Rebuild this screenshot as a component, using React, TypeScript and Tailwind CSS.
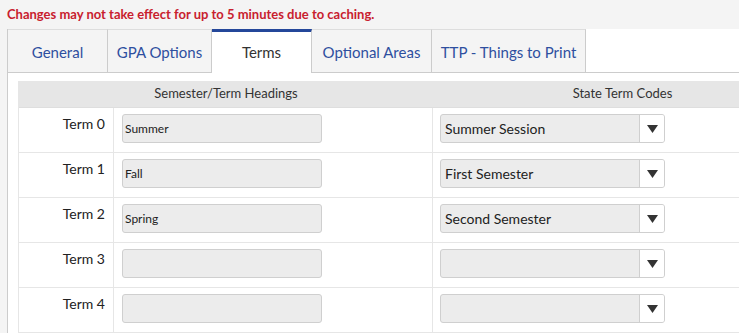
import React from "react";

const tabs = [
  { label: "General", w: "w-[100px]" },
  { label: "GPA Options", w: "w-[104px]" },
  { label: "Terms", w: "w-[100px]", active: true },
  { label: "Optional Areas", w: "w-[120px]" },
  { label: "TTP - Things to Print", w: "w-[154px]" },
];

const rows = [
  { term: "Term 0", heading: "Summer", code: "Summer Session" },
  { term: "Term 1", heading: "Fall", code: "First Semester" },
  { term: "Term 2", heading: "Spring", code: "Second Semester" },
  { term: "Term 3", heading: "", code: "" },
  { term: "Term 4", heading: "", code: "" },
];

function Select({ value }: { value: string }) {
  return (
    <div className="flex h-[29px] w-[225px] overflow-hidden rounded-[3px] border border-[#cfcfcf] bg-[#ececec]">
      <div className="flex flex-1 items-center pl-[4px] text-[14px] text-[#222]">{value}</div>
      <div className="flex w-[25px] items-center justify-center border-l border-[#cfcfcf] bg-white">
        <svg width="11" height="8" viewBox="0 0 11 8">
          <path d="M0 0 H11 L5.5 8 Z" fill="#333" />
        </svg>
      </div>
    </div>
  );
}

export default function App() {
  return (
    <div className="h-[333px] w-[739px] overflow-hidden bg-[#f4f4f4] font-['Lato',sans-serif]">
      <div className="flex h-[29px] items-center pl-[7px] text-[13px] font-bold text-[#c8202e]">
        Changes may not take effect for up to 5 minutes due to caching.
      </div>
      <div className="ml-[7px] h-full border-l border-[#cccccc] bg-white">
        <div className="flex h-[44px] border-b border-[#cccccc]">
          {tabs.map((t) =>
            t.active ? (
              <div
                key={t.label}
                className={`${t.w} -mb-px flex items-center justify-center border-r border-t-[3px] border-[#cccccc] border-t-[#24479a] bg-white text-[15px] text-[#333]`}
              >
                {t.label}
              </div>
            ) : (
              <div
                key={t.label}
                className={`${t.w} flex items-center justify-center border-r border-t border-[#cccccc] border-t-[#dddddd] bg-[#f4f4f4] pt-[3px] text-[15px] text-[#2e4f9f]`}
              >
                {t.label}
              </div>
            ),
          )}
        </div>
        <div className="pl-[10px] pt-[8px]">
          <div className="w-[794px] border-l border-[#e6e6e6]">
            <div className="flex h-[27px] border-b border-[#dedede] bg-[#e6e6e6] text-[13px] text-[#333]">
              <div className="flex w-[414px] items-center justify-center">Semester/Term Headings</div>
              <div className="flex flex-1 items-center justify-center">State Term Codes</div>
            </div>
            {rows.map((r) => (
              <div key={r.term} className="flex h-[45px] border-b border-[#e6e6e6]">
                <div className="w-[95px] border-r border-[#e6e6e6] pr-[8px] pt-[6px] text-right text-[14px] leading-[20px] text-[#222]">
                  {r.term}
                </div>
                <div className="w-[319px] border-r border-[#e6e6e6] pl-[8px] pt-[6px]">
                  <div className="flex h-[29px] w-[200px] items-center rounded-[3px] border border-[#cfcfcf] bg-[#ececec] pl-[2px] text-[12px] text-[#222]">
                    {r.heading}
                  </div>
                </div>
                <div className="flex-1 pl-[7px] pt-[6px]">
                  <Select value={r.code} />
                </div>
              </div>
            ))}
          </div>
        </div>
      </div>
    </div>
  );
}
